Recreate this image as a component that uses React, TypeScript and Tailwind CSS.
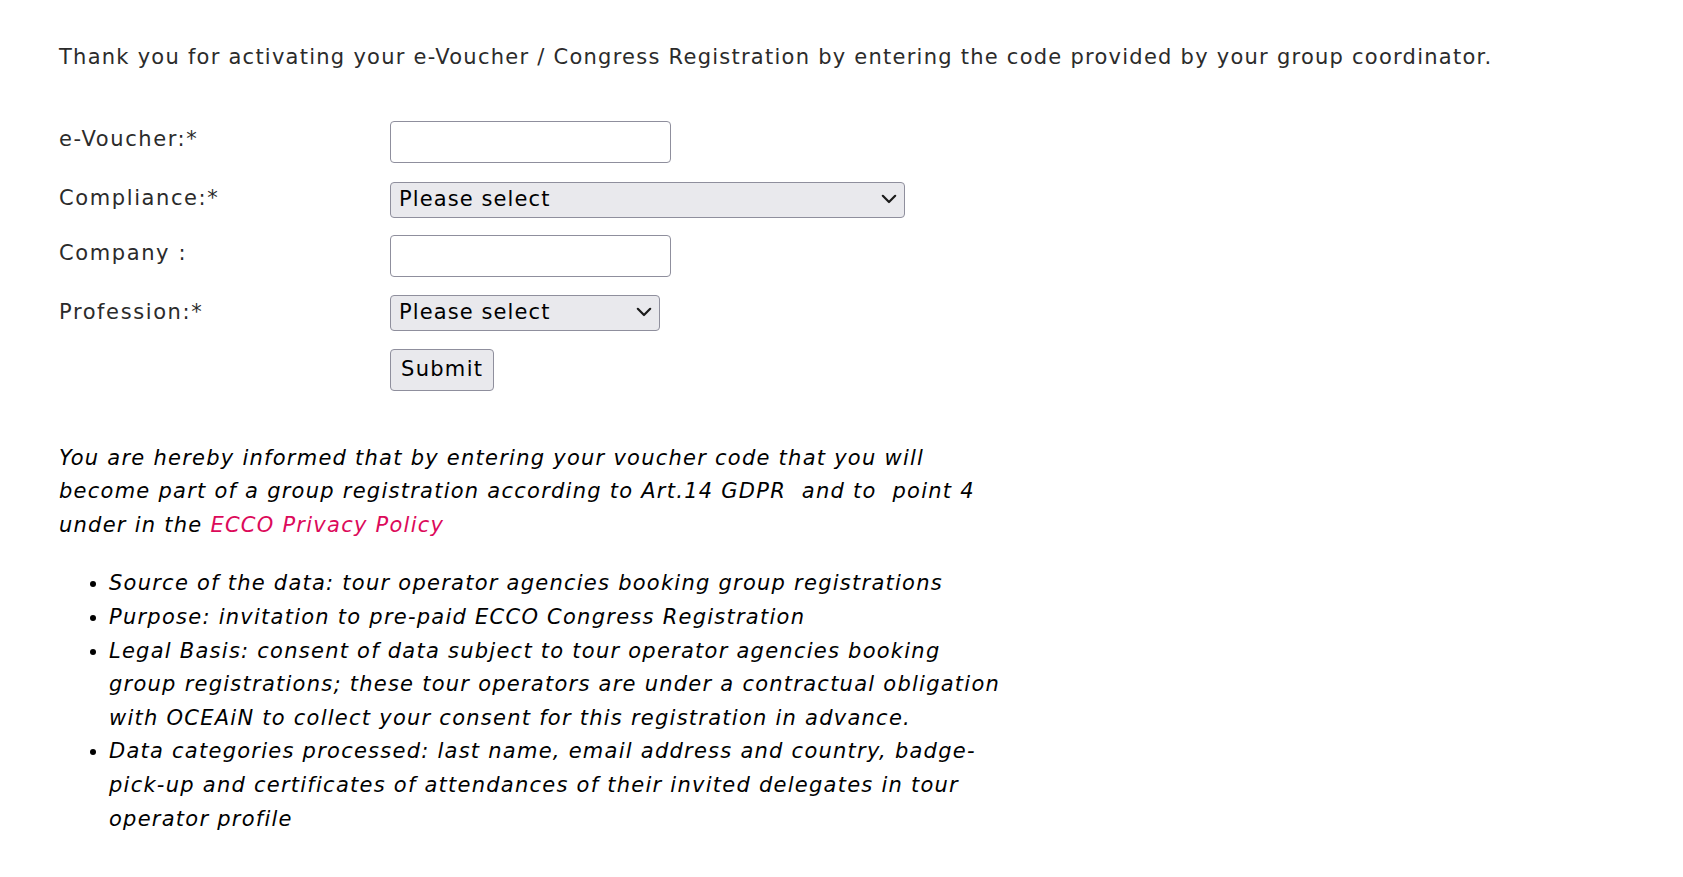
const LABEL = "w-[331px] shrink-0 tracking-[1.6px]"

function Chevron() {
  return (
    <svg
      className="pointer-events-none absolute right-[8px] top-[12px]"
      width="16"
      height="10"
      viewBox="0 0 16 10"
      fill="none"
    >
      <path d="M1.8 1.8 L8 8 L14.2 1.8" stroke="#1b1b1b" strokeWidth="2.2" strokeLinecap="round" strokeLinejoin="round" />
    </svg>
  )
}

function Select({ width }: { width: string }) {
  return (
    <div className={`relative ${width}`}>
      <select
        defaultValue=""
        className="h-[36px] w-full appearance-none rounded-[4px] border border-[#8f8f9d] bg-[#e9e9ed] pl-[8px] pr-[30px] text-[21px] leading-none tracking-[1.1px] text-black outline-none"
      >
        <option value="">Please select</option>
      </select>
      <Chevron />
    </div>
  )
}

export default function App() {
  return (
    <div className="min-h-screen bg-white px-[59px] pt-[41px] font-['DejaVu_Sans',sans-serif] text-[21px] leading-[1.6] tracking-[1.25px] text-[#2b2b2b]">
      <p>
        Thank you for activating your e-Voucher / Congress Registration by entering the code
        provided by your group coordinator.
      </p>

      <form className="mt-[46px]" onSubmit={(e) => e.preventDefault()}>
        <div className="flex items-start">
          <label className={`${LABEL} pt-[2px]`}>e-Voucher:*</label>
          <input
            type="text"
            className="h-[42px] w-[281px] rounded-[4px] border border-[#8f8f9d] bg-white px-2 outline-none"
          />
        </div>
        <div className="mt-[19px] flex items-start">
          <label className={LABEL}>Compliance:*</label>
          <Select width="w-[515px]" />
        </div>
        <div className="mt-[17px] flex items-start">
          <label className={`${LABEL} pt-[2px]`}>Company :</label>
          <input
            type="text"
            className="h-[42px] w-[281px] rounded-[4px] border border-[#8f8f9d] bg-white px-2 outline-none"
          />
        </div>
        <div className="mt-[18px] flex items-start">
          <label className={`${LABEL} pt-[1px]`}>Profession:*</label>
          <Select width="w-[270px]" />
        </div>
        <div className="mt-[18px] flex items-start">
          <span className={LABEL} />
          <button
            type="submit"
            className="h-[42px] rounded-[4px] border border-[#8f8f9d] bg-[#e9e9ed] px-[10px] leading-none tracking-[1.3px] text-black"
          >
            Submit
          </button>
        </div>
      </form>

      <div className="mt-[51px] max-w-[944px] italic text-black">
        <p>
          You are hereby informed that by entering your voucher code that you will become part of a
          group registration according to Art.14 GDPR&nbsp; and to&nbsp; point 4 under in the{" "}
          <a href="#" className="text-[#dc0a5a]">
            ECCO Privacy Policy
          </a>
        </p>
        <ul className="mt-[25px] list-disc pl-[50px]">
          <li>Source of the data: tour operator agencies booking group registrations</li>
          <li>Purpose: invitation to pre-paid ECCO Congress Registration</li>
          <li>
            Legal Basis: consent of data subject to tour operator agencies booking group
            registrations; these tour operators are under a contractual obligation with OCEAiN to
            collect your consent for this registration in advance.
          </li>
          <li>
            Data categories processed: last name, email address and country, badge-pick-up and
            certificates of attendances of their invited delegates in tour operator profile
          </li>
        </ul>
      </div>
    </div>
  )
}
